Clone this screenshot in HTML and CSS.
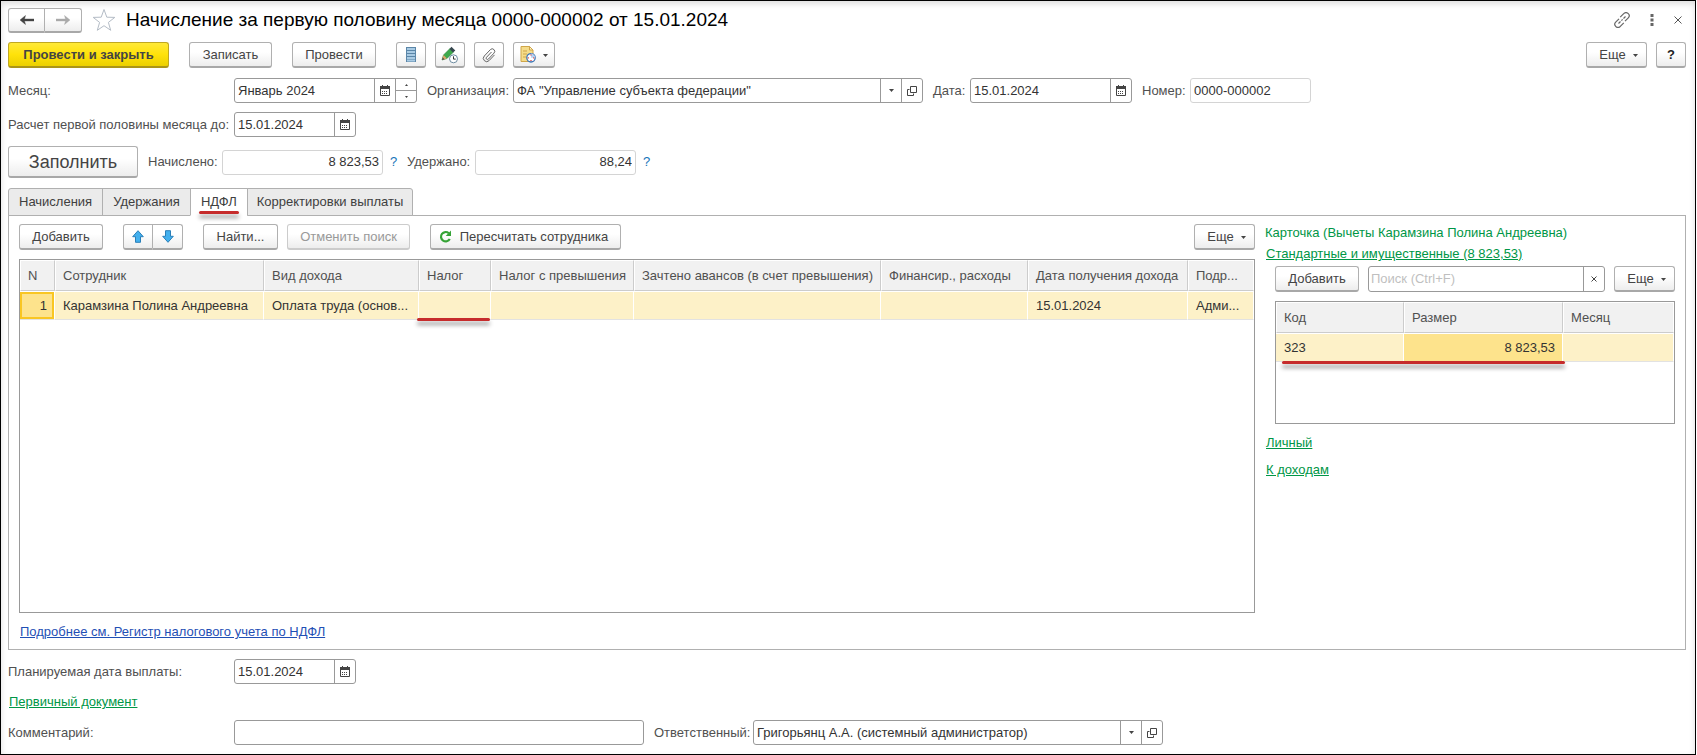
FILE: index.html
```html
<!DOCTYPE html>
<html lang="ru">
<head>
<meta charset="utf-8">
<title>Начисление за первую половину месяца</title>
<link rel="stylesheet" href="styles.css">
</head>
<body>
<svg class="defs" aria-hidden="true">
  <symbol id="cal" viewBox="0 0 10 11"><path d="M.5 2.500h9v8h-9z" fill="#fff" stroke="#444"/><path d="M0 1h10v3H0z" fill="#444"/><path d="M2.500 0v2M7.500 0v2" stroke="#444"/><path d="M2 6.500h1M4 6.500h1M6 6.500h1M2 8.500h1M4 8.500h1M6 8.500h1" stroke="#444"/></symbol>
  <symbol id="open" viewBox="0 0 10 10"><path d="M3.500 .5h6v6h-6z" fill="none" stroke="#444"/><path d="M2.500 3.500h-2v6h6v-2" fill="none" stroke="#444"/></symbol>
  <symbol id="down" viewBox="0 0 5 3"><path d="M0 0h5L2.500 3z" fill="#444"/></symbol>
</svg>
<main class="window">
  <header class="titlebar">
    <div class="group nav">
      <button class="btn" type="button" aria-label="Назад"><svg width="14" height="10" viewBox="0 0 14 10"><path d="M0 5l5.500-4.500L4.500 4H14v2H4.500l1 3.500z" fill="#444" stroke="#444" stroke-width=".4"/></svg></button>
      <button class="btn" type="button" aria-label="Вперед"><svg width="14" height="10" viewBox="0 0 14 10"><path d="M14 5L8.500.5l1 3.500H0v2h9.500l-1 3.500z" fill="#aaa" stroke="#aaa" stroke-width=".4"/></svg></button>
    </div>
    <svg class="star" width="24" height="24" viewBox="0 0 24 24"><path d="M12 1.500l2.800 7.700 8 .2-6.400 5 2.300 7.900L12 17.700l-6.700 4.600 2.300-7.900-6.400-5 8-.2z" fill="#fff" stroke="#b4bcc6"/></svg>
    <h1 class="title">Начисление за первую половину месяца 0000-000002 от 15.01.2024</h1>
    <div class="wintools">
      <svg width="16" height="16" viewBox="0 0 16 16" fill="none" stroke="#666" stroke-width="1.200"><path d="M6.200 5.200l3.500-3.500a2.900 2.900 0 0 1 4.600 0 2.900 2.900 0 0 1 0 4.100L11 9.200M9.800 10.800l-3.500 3.500a2.900 2.900 0 0 1-4.600 0 2.900 2.900 0 0 1 0-4.100L5 6.800"/><path d="M4.500 11.500l2-2M7.400 8.600l1.200-1.200M9.500 6.500l2-2"/></svg>
      <svg width="4" height="12" viewBox="0 0 4 12" fill="#666"><path d="M.5 0h3v3h-3zM.5 4.500h3v3h-3zM.5 9h3v3h-3z"/></svg>
      <svg width="8" height="8" viewBox="0 0 8 8" stroke="#555"><path d="M.5.5l7 7M7.500.5l-7 7"/></svg>
    </div>
  </header>

  <div class="commands">
    <button class="btn primary" type="button">Провести и закрыть</button>
    <button class="btn w83" type="button">Записать</button>
    <button class="btn w84" type="button">Провести</button>
    <div class="icons">
      <button class="btn icon" type="button" aria-label="Журнал"><svg width="10" height="15" viewBox="0 0 10 15"><path d="M0 0h10v15H0z" fill="#5b86a8"/><path d="M1 2h8M1 5h8M1 8h8M1 11h8M1 13.500h8" stroke="#a9cbe4" stroke-width="1.800"/></svg></button>
      <button class="btn icon" type="button" aria-label="Изменить"><svg width="18" height="18" viewBox="0 0 18 18"><path d="M1 14l1.500-5L9 2.500 12.500 6 6 12.500z" fill="#3daa4c" stroke="#2b7d3a" stroke-width=".6"/><path d="M1 14l1.500-5L6 12.500z" fill="#dba56a"/><path d="M1 14l.8-2.400 1.600 1.600z" fill="#444"/><path d="M8.500 3l2-2.200 3.800 3.700L12 6.500z" fill="#37474f"/><circle cx="12.500" cy="12.800" r="4" fill="#fff" stroke="#6c8ba0"/><path d="M12.500 10.300v2.800h2.200" fill="none" stroke="#333"/></svg></button>
      <button class="btn icon" type="button" aria-label="Файлы"><svg width="16" height="16" viewBox="0 0 16 16" fill="none" stroke="#666"><path d="M10.500 5l-5 5.300a1.300 1.300 0 0 0 1.900 1.800l5.600-6a2.500 2.500 0 0 0-3.600-3.500L3.300 9a3.300 3.300 0 0 0 4.800 4.600l5.400-5.700"/></svg></button>
      <button class="btn icon wide" type="button" aria-label="Отчеты"><svg width="16" height="17" viewBox="0 0 16 17"><path d="M1 .5h8.500L13 4v11.500H1z" fill="#f5dc8a" stroke="#cfa64a"/><path d="M9.500.5V4H13z" fill="#fff3c4" stroke="#cfa64a"/><path d="M3 5h4M3 8h4M3 11h3" stroke="#cfa64a"/><circle cx="11" cy="11.800" r="4.200" fill="#fff" stroke="#3d75b5" stroke-width="1.300"/><path d="M11 11.800V7.600a4.200 4.200 0 0 1 4.200 4.200z" fill="#b6d3f2"/><path d="M11 8.600v1M11 14v1M7.800 11.800h1M13.200 11.800h1" stroke="#d33" stroke-width="1.200"/></svg><svg class="caret" width="5" height="3"><use href="#down"/></svg></button>
    </div>
    <button class="btn more push" type="button">Еще<svg class="caret" width="5" height="3"><use href="#down"/></svg></button>
    <button class="btn help" type="button">?</button>
  </div>

  <div class="row">
    <label class="lead" for="month">Месяц:</label>
    <div class="field month"><input id="month" value="Январь 2024"><button type="button" aria-label="Календарь"><svg width="10" height="11"><use href="#cal"/></svg></button><span class="spin"><button type="button" aria-label="Больше"><svg width="3" height="2" viewBox="0 0 3 2"><path d="M0 2h3L1.500 0z" fill="#444"/></svg></button><button type="button" aria-label="Меньше"><svg width="3" height="2" viewBox="0 0 3 2"><path d="M0 0h3L1.500 2z" fill="#444"/></svg></button></span></div>
    <label class="next org-label" for="org">Организация:</label>
    <div class="field long"><input id="org" value="ФА &quot;Управление субъекта федерации&quot;"><button type="button" aria-label="Выбрать"><svg width="5" height="3"><use href="#down"/></svg></button><button type="button" aria-label="Открыть"><svg width="10" height="10"><use href="#open"/></svg></button></div>
    <label class="next date-label" for="date">Дата:</label>
    <div class="field datetime"><input id="date" value="15.01.2024"><button type="button" aria-label="Календарь"><svg width="10" height="11"><use href="#cal"/></svg></button></div>
    <label class="next num-label" for="num">Номер:</label>
    <div class="field muted num"><input id="num" value="0000-000002" readonly></div>
  </div>

  <div class="row">
    <label class="lead" for="until">Расчет первой половины месяца до:</label>
    <div class="field date"><input id="until" value="15.01.2024"><button type="button" aria-label="Календарь"><svg width="10" height="11"><use href="#cal"/></svg></button></div>
  </div>

  <div class="row totals">
    <button class="btn fill" type="button">Заполнить</button>
    <label class="next acc-label" for="acc">Начислено:</label>
    <div class="field muted sum"><input id="acc" value="8 823,53" readonly></div>
    <a class="hint" href="#">?</a>
    <label class="held-label" for="held">Удержано:</label>
    <div class="field muted sum"><input id="held" value="88,24" readonly></div>
    <a class="hint" href="#">?</a>
  </div>

  <nav class="tabs" role="tablist">
    <button class="tab" role="tab" type="button">Начисления</button>
    <button class="tab" role="tab" type="button">Удержания</button>
    <button class="tab active" role="tab" type="button" aria-selected="true"><span class="marked">НДФЛ</span></button>
    <button class="tab" role="tab" type="button">Корректировки выплаты</button>
  </nav>

  <section class="panel">
    <div class="main">
      <div class="toolbar">
        <button class="btn w84" type="button">Добавить</button>
        <div class="group move">
          <button class="btn" type="button" aria-label="Вверх"><svg width="12" height="13" viewBox="0 0 12 13"><path d="M6 .7l5.300 6H8.500v5.600h-5V6.700H.7z" fill="#42b0ee" stroke="#2a7fb8"/></svg></button>
          <button class="btn" type="button" aria-label="Вниз"><svg width="12" height="13" viewBox="0 0 12 13"><path d="M6 12.300l5.300-6H8.500V.7h-5v5.600H.7z" fill="#42b0ee" stroke="#2a7fb8"/></svg></button>
        </div>
        <button class="btn find" type="button">Найти...</button>
        <button class="btn cancel" type="button" disabled>Отменить поиск</button>
        <button class="btn recalc" type="button"><svg width="13" height="13" viewBox="0 0 13 13"><path d="M9.800 3.200A4.700 4.700 0 1 0 10.800 9" fill="none" stroke="#35a336" stroke-width="2.200"/><path d="M12 .5v5.500H6.700z" fill="#35a336"/></svg>Пересчитать сотрудника</button>
        <button class="btn more push" type="button">Еще<svg class="caret" width="5" height="3"><use href="#down"/></svg></button>
      </div>
      <div class="grid">
        <table class="tbl">
          <colgroup><col class="c1"><col class="c2"><col class="c3"><col class="c4"><col class="c5"><col class="c6"><col class="c7"><col class="c8"><col class="c9"></colgroup>
          <thead><tr><th>N</th><th>Сотрудник</th><th>Вид дохода</th><th>Налог</th><th>Налог с превышения</th><th>Зачтено авансов (в счет превышения)</th><th>Финансир., расходы</th><th>Дата получения дохода</th><th>Подр...</th></tr></thead>
          <tbody><tr><td class="current">1</td><td>Карамзина Полина Андреевна</td><td>Оплата труда (основ...</td><td class="underlined"></td><td></td><td></td><td></td><td>15.01.2024</td><td>Адми...</td></tr></tbody>
        </table>
      </div>
      <a class="blue" href="#">Подробнее см. Регистр налогового учета по НДФЛ</a>
    </div>
    <aside class="card">
      <h2 class="card-title">Карточка (Вычеты Карамзина Полина Андреевна)</h2>
      <a class="green" href="#">Стандартные и имущественные (8 823,53)</a>
      <div class="card-body">
        <div class="search-row">
          <button class="btn w84" type="button">Добавить</button>
          <div class="field search"><input aria-label="Поиск" placeholder="Поиск (Ctrl+F)"><button type="button" aria-label="Очистить"><svg width="6" height="6" viewBox="0 0 6 6" stroke="#444"><path d="M.5.5l5 5M5.500.5l-5 5"/></svg></button></div>
          <button class="btn more" type="button">Еще<svg class="caret" width="5" height="3"><use href="#down"/></svg></button>
        </div>
        <div class="grid small">
          <table class="tbl">
            <colgroup><col class="k1"><col class="k2"><col class="k3"></colgroup>
            <thead><tr><th>Код</th><th>Размер</th><th>Месяц</th></tr></thead>
            <tbody><tr><td>323</td><td class="selected">8 823,53</td><td></td></tr></tbody>
          </table>
          <span class="redline"></span>
        </div>
      </div>
      <a class="green" href="#">Личный</a>
      <a class="green" href="#">К доходам</a>
    </aside>
  </section>

  <footer class="footer">
    <div class="row">
      <label class="lead" for="pay">Планируемая дата выплаты:</label>
      <div class="field date"><input id="pay" value="15.01.2024"><button type="button" aria-label="Календарь"><svg width="10" height="11"><use href="#cal"/></svg></button></div>
    </div>
    <a class="green" href="#">Первичный документ</a>
    <div class="row">
      <label class="lead" for="comment">Комментарий:</label>
      <div class="field long"><input id="comment"></div>
      <label class="next resp-label" for="resp">Ответственный:</label>
      <div class="field long"><input id="resp" value="Григорьянц А.А. (системный администратор)"><button type="button" aria-label="Выбрать"><svg width="5" height="3"><use href="#down"/></svg></button><button type="button" aria-label="Открыть"><svg width="10" height="10"><use href="#open"/></svg></button></div>
    </div>
  </footer>
</main>
</body>
</html>
```
FILE: styles.css
```css
* { box-sizing: border-box; }
body { margin: 0; background: #fff; font: 13px/16px "Liberation Sans", Arial, sans-serif; color: #333; }
button, input { font: inherit; color: inherit; margin: 0; }
svg { display: block; flex: none; }
.defs { display: none; }
.window {
  display: flex; flex-direction: column; min-height: 100vh; margin-right: 1px; padding: 7px 9px 9px 7px;
  border: 1px solid #000; box-shadow: inset 0 3px 6px #ddd;
}
.titlebar { display: flex; align-items: center; height: 24px; }
.title { margin: 0 0 0 10px; font-size: 19px; line-height: 24px; font-weight: 400; color: #000; }
.star { margin-left: 10px; }
.wintools { display: flex; align-items: center; gap: 20px; margin: 0 4px 0 auto; }
.btn {
  display: flex; align-items: center; justify-content: center; height: 26px; padding: 0 4px;
  border: 1px solid #b0b0b0; border-bottom: 2px solid #a8a8a8; border-radius: 3px;
  background: linear-gradient(#fff 40%, #ededed); color: #444; white-space: nowrap;
}
.btn:disabled { color: #999; border-color: #ccc; }
.group { display: flex; }
.group .btn { width: 30px; }
.group .btn:first-child { border-radius: 3px 0 0 3px; }
.group .btn:last-child { border-radius: 0 3px 3px 0; border-left: 0; }
.nav .btn { width: 37px; height: 25px; }
.commands { display: flex; align-items: center; margin-top: 10px; }
.commands > .btn + .btn:not(.help) { margin-left: 20px; }
.primary { width: 161px; font-weight: 700; border-color: #c0a820; border-bottom-color: #ab9518; background: linear-gradient(#ffe938, #ffe20a 50%, #ecd000); }
.w83 { width: 83px; }
.w84 { width: 84px; }
.icons { display: flex; gap: 9px; margin-left: 20px; }
.icon { width: 30px; }
.icon.wide { width: 42px; }
.caret { margin: 2px 0 0 7px; }
.more { width: 61px; padding-left: 8px; }
.push { margin-left: auto; }
.help { width: 30px; margin-left: 9px; font-weight: 700; color: #222; }
.row { display: flex; align-items: center; margin-top: 9px; color: #505050; }
.commands + .row { margin-top: 10px; }
.lead { width: 226px; white-space: nowrap; }
.next { margin-left: 10px; }
.field { display: flex; height: 25px; border: 1px solid #999; border-radius: 3px; background: #fff; color: #333; overflow: hidden; }
.field input { flex: 1; min-width: 0; width: 0; border: 0; padding: 0 3px; background: none; outline: 0; }
.field > button { width: 21px; padding: 0; border: 0; border-left: 1px solid #999; background: none; display: flex; align-items: center; justify-content: center; }
.field ::placeholder { color: #bfbfbf; opacity: 1; }
.muted { border-color: #d4d4d4; }
.month { width: 183px; }
.spin { display: flex; flex-direction: column; width: 21px; border-left: 1px solid #999; }
.spin button { flex: 1; display: flex; align-items: center; justify-content: center; padding: 0; border: 0; background: none; }
.spin button + button { border-top: 1px solid #999; }
.long { width: 410px; }
.date { width: 122px; }
.datetime { width: 162px; }
.num { width: 121px; }
.sum { width: 161px; }
.sum input { text-align: right; }
.org-label { width: 86px; }
.date-label { width: 37px; }
.num-label { width: 48px; }
.acc-label { width: 74px; }
.held-label { width: 68px; }
.resp-label { width: 99px; }
.hint { width: 24px; padding-left: 7px; color: #1674b8; text-decoration: none; }
.fill { width: 130px; height: 32px; font-size: 18px; }
.tabs { display: flex; margin-top: 10px; position: relative; z-index: 1; }
.tab { height: 28px; padding: 0 10px; border: 1px solid #b0b0b0; background: #ebebeb; color: #404040; margin-right: -1px; }
.tab:first-child { border-radius: 3px 0 0 0; }
.tab:last-child { border-radius: 0 3px 0 0; padding: 0 9px; }
.tab.active { background: #fff; border-bottom-color: #fff; }
.marked { position: relative; }
.marked::after { content: ""; position: absolute; left: -2px; right: -2px; bottom: -5px; height: 3px; border-radius: 2px; background: #c62c2c; box-shadow: 0 4px 4px #999; }
.panel { flex: 1; display: flex; gap: 10px; margin-top: -1px; padding: 8px 10px 9px; border: 1px solid #b0b0b0; }
.main { flex: 1; min-width: 0; display: flex; flex-direction: column; }
.toolbar { display: flex; margin-bottom: 9px; }
.move { margin: 0 20px; }
.find { width: 75px; }
.cancel { width: 123px; margin: 0 20px 0 9px; }
.recalc { width: 191px; gap: 8px; padding-right: 8px; }
.grid { flex: 1; border: 1px solid #999; }
.tbl { width: 100%; table-layout: fixed; border-collapse: separate; border-spacing: 0; }
.tbl th { height: 31px; padding: 0 7px; border: 1px solid #fff; border-right-color: #ccc; border-bottom-color: #ccc; background: #f1f1f1; color: #505050; font-weight: 400; text-align: left; white-space: nowrap; }
.tbl td { height: 29px; padding: 0 7px 0 8px; border-top: 1px solid #fff; border-right: 1px solid #fff; border-bottom: 1px solid #e2e2e2; background: #fdf1c8; white-space: nowrap; }
.tbl th:last-child { border-right-color: #fff; }
.tbl .current { background: #fde38c; box-shadow: inset 0 0 0 2px #f9c623; text-align: right; }
.tbl .selected { background: #fde38c; text-align: right; }
.c1 { width: 35px; } .c2 { width: 209px; } .c3 { width: 155px; } .c4 { width: 72px; } .c5 { width: 143px; }
.c6 { width: 247px; } .c7 { width: 147px; } .c8 { width: 160px; }
.k1 { width: 128px; } .k2 { width: 159px; }
.underlined { position: relative; }
.underlined::after, .redline { content: ""; position: absolute; left: -2px; right: 0; bottom: -2px; height: 3px; border-radius: 2px; background: #c62c2c; box-shadow: 0 4px 4px #999; }
.blue { align-self: flex-start; margin: 11px 0 0 1px; color: #1f4fb5; }
.card { width: 410px; display: flex; flex-direction: column; align-items: flex-start; }
.card-title { margin: 1px 0 5px; font-size: 13px; line-height: 16px; font-weight: 400; color: #009646; }
.green { color: #009646; margin-left: 1px; }
.card-body { align-self: stretch; margin: 4px 0 11px 10px; }
.search-row { display: flex; gap: 9px; margin-bottom: 9px; }
.search { flex: 1; height: 26px; }
.search input { padding: 0 2px; }
.small { position: relative; height: 123px; }
.small .redline { left: 6px; right: auto; width: 283px; bottom: auto; top: 59px; }
.card > .green ~ .green { margin-bottom: 11px; }
.footer .row { margin-top: 9px; }
.footer > .green { display: inline-block; margin-top: 10px; }
.footer > .green + .row { margin-top: 10px; }
```
